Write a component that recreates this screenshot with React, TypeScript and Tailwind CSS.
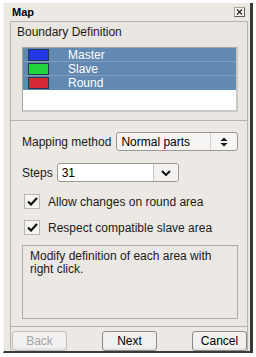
import React from 'react';

const ROWS = [
  { name: 'Master', color: 'bg-[#2236e6]' },
  { name: 'Slave', color: 'bg-[#22d43c]' },
  { name: 'Round', color: 'bg-[#d52a35]' },
];

const Check = () => (
  <div className="w-[16px] h-[15px] border border-[#b9b6b0] bg-[#f6f5f3] flex items-center justify-center">
    <svg width="11" height="9" viewBox="0 0 11 9">
      <path d="M1 4.5 L4 7.5 L10 1" stroke="#111" strokeWidth="2.2" fill="none" />
    </svg>
  </div>
);

const Btn = ({ label, disabled }: { label: string; disabled?: boolean }) => (
  <button
    className={`w-[55px] h-[20px] rounded-[3px] border bg-[#f2f1ef] text-[12px] leading-[14px] shadow-[inset_0_-2px_2px_rgba(0,0,0,0.06)] ${
      disabled ? 'text-[#a3a3a3] border-[#c2c0bc]' : 'text-black border-[#8e8c88]'
    }`}
  >
    {label}
  </button>
);

export default function App() {
  return (
    <div className="w-[256px] h-[357px] bg-white pt-[3px] pl-[3px] font-['Liberation_Sans',Arial,sans-serif] text-[12px] leading-[14px] text-[#1a1a1a]">
      <div className="w-[250px] h-[350px] bg-[#ece9e5] border-l border-[#f8f7f5] border-r-[3px] border-r-[#3b3a38] border-b-[2px] border-b-[#3b3a38] flex flex-col">
        {/* title bar */}
        <div className="h-[19px] flex items-center justify-between pl-[8px] pr-[5px]">
          <span className="font-bold text-[11px] text-black">Map</span>
          <div className="w-[11px] h-[10px] border border-[#a9a6a1] border-r-[#5d5b58] border-b-[#5d5b58] bg-[#f3f2ef] flex items-center justify-center">
            <svg width="7" height="6" viewBox="0 0 7 6">
              <path d="M1 0.5 L6 5.5 M6 0.5 L1 5.5" stroke="#222" strokeWidth="1.1" />
            </svg>
          </div>
        </div>

        <div className="flex-1 ml-[6px] mr-[2px] border-t border-l border-r border-[#b7b4ae] rounded-bl-[3px] flex flex-col">
          {/* Boundary definition group */}
          <div className="pt-[3px] pl-[6px] pr-[9px] border-b border-[#b7b4ae] pb-[8px] bg-[#e9e6e2]">
            <div>Boundary Definition</div>
            <div className="mt-[8px] ml-[5px] h-[65px] border border-[#a8a6a2] bg-white border-r-[2px] border-r-[#c9c7c3] border-b-[2px] border-b-[#c9c7c3]">
              {ROWS.map((r, i) => (
                <div
                  key={r.name}
                  className={`h-[14px] bg-[#6189b1] flex items-center ${i < 2 ? 'border-b border-[#7f9cbb]' : ''}`}
                >
                  <div className={`ml-[5px] w-[21px] h-[12px] ${r.color} border border-[#26384e]`} />
                  <span className="ml-[19px] text-white">{r.name}</span>
                </div>
              ))}
            </div>
          </div>

          <div className="pl-[11px] pr-[9px] flex flex-col flex-1">
            <div className="mt-[11px] flex items-center gap-[5px]">
              <span>Mapping method</span>
              <div className="flex-1 h-[19px] rounded-[3px] border border-[#9a9894] bg-[#f6f5f3] flex items-center">
                <span className="flex-1 pl-[4px] text-black">Normal parts</span>
                <div className="w-[27px] h-full border-l border-[#d2d0cc] flex items-center justify-center">
                  <svg width="8" height="10" viewBox="0 0 8 10">
                    <path d="M0.5 4 L4 0.5 L7.5 4 Z M0.5 6 L4 9.5 L7.5 6 Z" fill="#111" />
                  </svg>
                </div>
              </div>
            </div>

            <div className="mt-[12px] flex items-center gap-[4px]">
              <span>Steps</span>
              <div className="w-[122px] h-[19px] rounded-[3px] border border-[#9a9894] bg-white flex items-center">
                <span className="flex-1 pl-[4px] text-black">31</span>
                <div className="w-[25px] h-full border-l border-[#c8c6c2] bg-[#f3f2f0] rounded-r-[3px] flex items-center justify-center">
                  <svg width="10" height="6" viewBox="0 0 10 6">
                    <path d="M1 1 L5 5 L9 1" stroke="#111" strokeWidth="2" fill="none" />
                  </svg>
                </div>
              </div>
            </div>

            <div className="mt-[12px] ml-[2px] flex items-center gap-[8px]">
              <Check />
              <span>Allow changes on round area</span>
            </div>
            <div className="mt-[11px] ml-[2px] flex items-center gap-[8px]">
              <Check />
              <span>Respect compatible slave area</span>
            </div>

            <div className="mt-[10px] h-[74px] border border-[#aeaba6] bg-[#ebe8e4] px-[7px] pt-[4px] leading-[13px]">
              Modify definition of each area with right click.
            </div>

            <div className="mt-[7px] -ml-[11px] -mr-[9px] border-t border-[#b7b4ae]" />
            <div className="flex justify-between pt-[4px] -ml-[10px] -mr-[9px]">
              <Btn label="Back" disabled />
              <Btn label="Next" />
              <Btn label="Cancel" />
            </div>
          </div>
        </div>
      </div>
    </div>
  );
}
